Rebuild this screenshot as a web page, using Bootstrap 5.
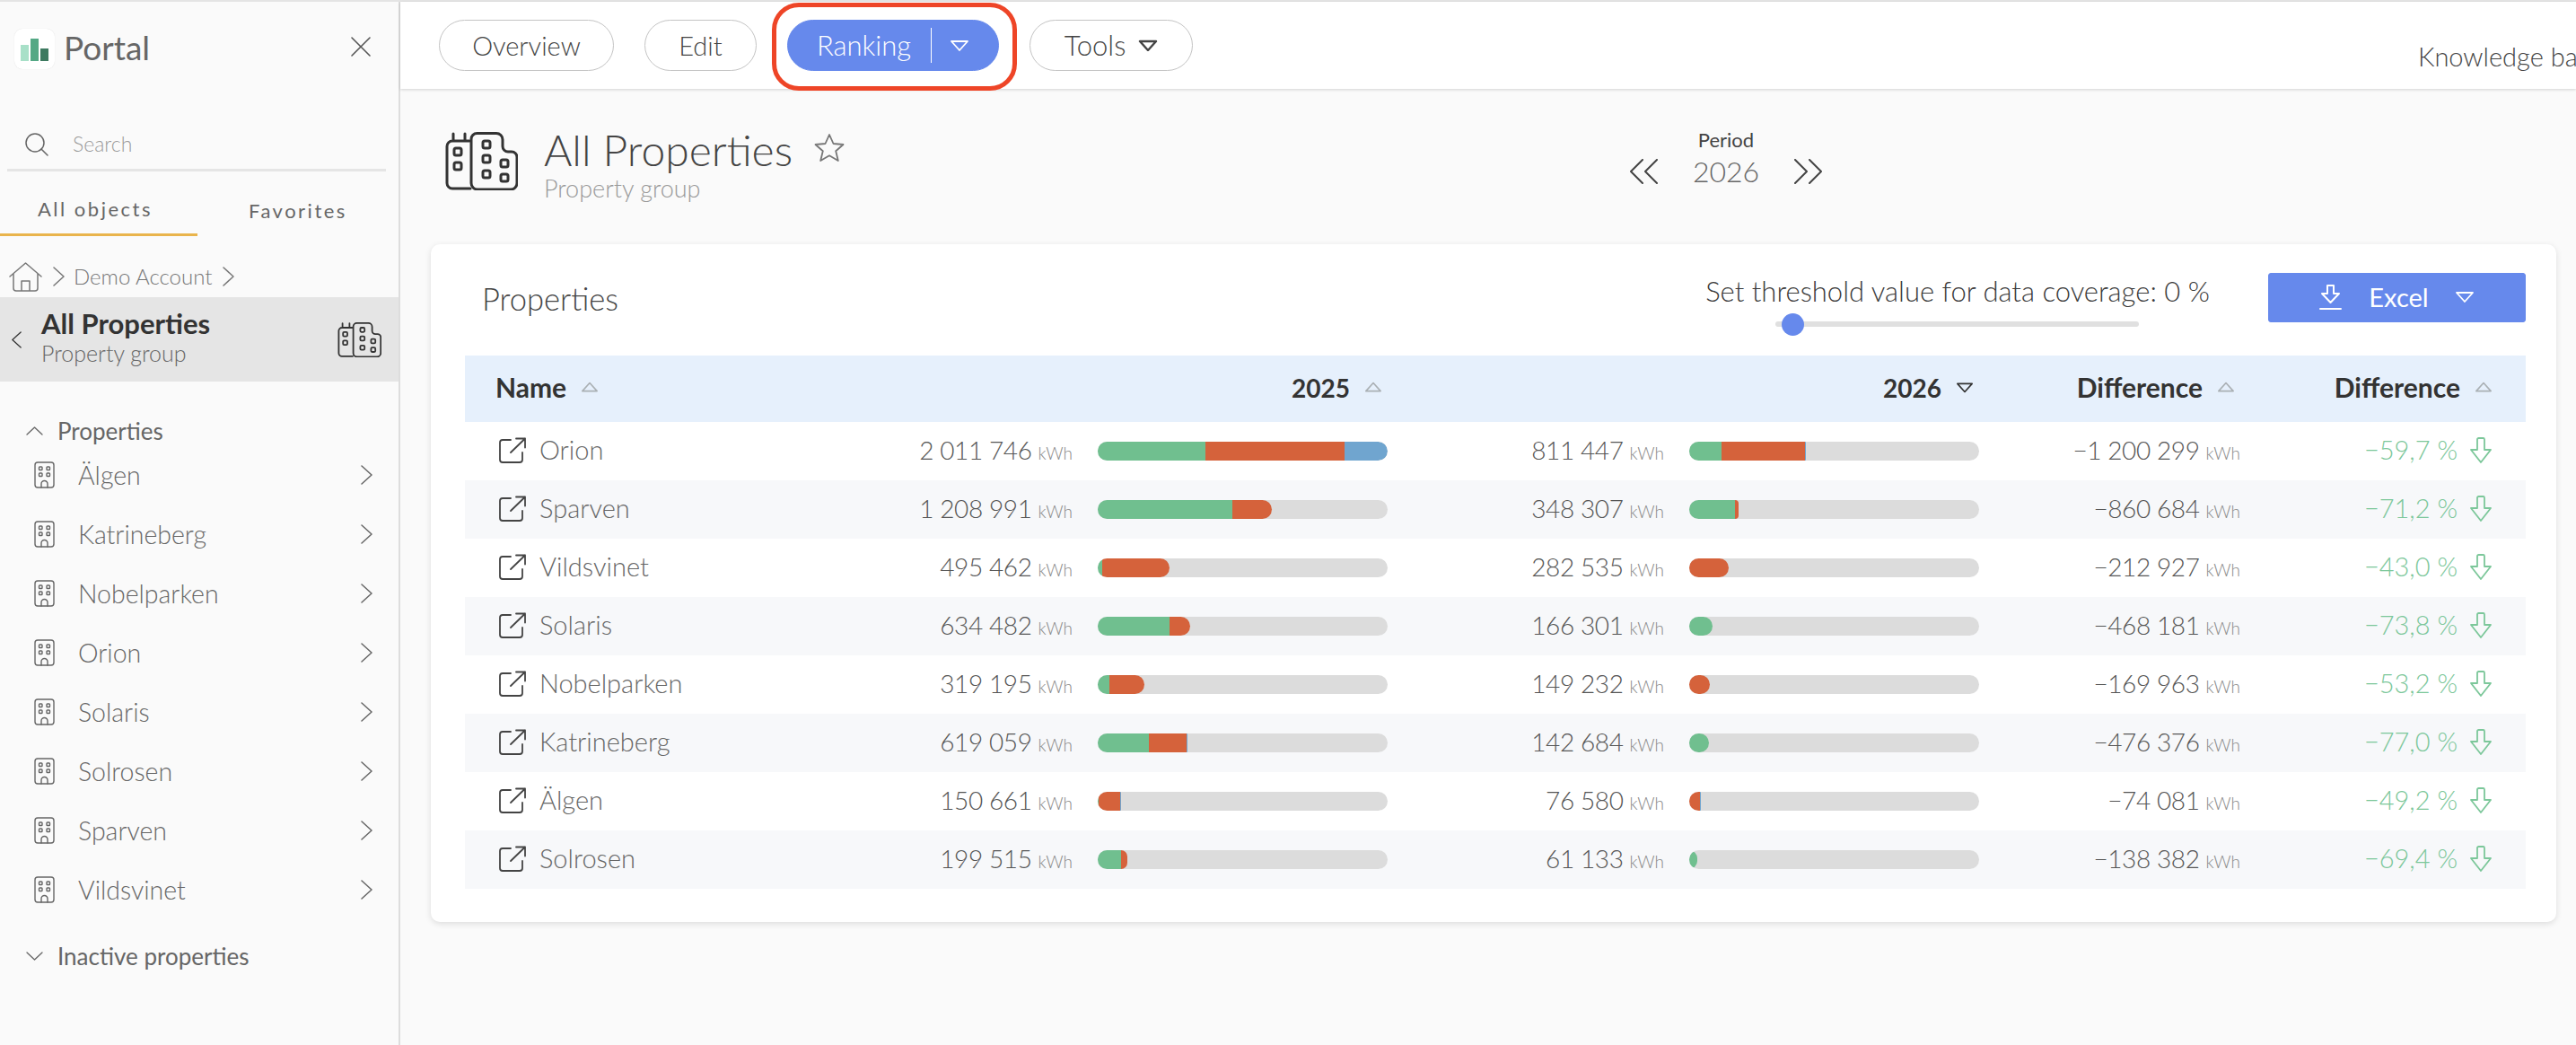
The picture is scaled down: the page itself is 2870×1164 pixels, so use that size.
<!DOCTYPE html>
<html lang="en">
<head>
    <meta charset="UTF-8">
    <title>Portal</title>
    <link href="https://cdn.jsdelivr.net/npm/bootstrap@5.3.0/dist/css/bootstrap.min.css" rel="stylesheet">
    <style>
        html, body { height: 100%; }
        body { font-family: "Lato", "Noto Sans", sans-serif; font-weight: 300; background: #fafafa; color: #444; overflow: hidden; }
        svg { display: block; flex: none; fill: none; stroke: currentColor; stroke-linecap: round; stroke-linejoin: round; }

        .app-shell { height: 1164px; border-top: 2px solid #e4e4e4; }

        /* sidebar */
        .side { width: 446px; flex: none; background: #fafafa; border-right: 2px solid #ddd; }
        .side-brand { height: 99px; padding: 30px 30px 0 16px; }
        .logo-tile { width: 45px; height: 45px; background: #fff; border-radius: 9px; padding: 10px 7px 9px; gap: 2px; box-shadow: 0 0 1px rgba(0,0,0,.15); }
        .logo-tile i { display: block; width: 9px; }
        .brand-name { font-size: 37px; font-weight: 400; color: #666; margin-left: 10px; line-height: 41px; }
        .side-search { margin: 32px 14px 0 8px; height: 58px; padding-left: 20px; border-bottom: 3px solid #e5e5e5; color: #666; }
        .side-search span { font-size: 23px; color: #9a9a9a; margin-left: 27px; }
        .side-tabs { height: 72px; }
        .side-tabs div { width: 220px; padding-left: 42px; font-size: 22px; font-weight: 400; letter-spacing: 2.5px; color: #666; line-height: 84px; }
        .side-tabs div + div { padding-left: 57px; line-height: 88px; }
        .side-tabs .on { border-bottom: 3px solid #e9b44c; }
        .crumbs { height: 68px; padding-left: 10px; color: #777; font-size: 24px; padding-top: 22px; }
        .crumbs svg { stroke-width: 1.500; }
        .side-active { height: 94px; background: #e5e5e5; padding: 0 19px 0 13px; }
        .side-active b { display: block; font-size: 31px; font-weight: 700; color: #333; line-height: 36px; }
        .side-active small { display: block; font-size: 25px; font-weight: 300; color: #666; line-height: 30px; }
        .side-head { font-size: 26px; font-weight: 400; color: #666; padding-left: 29px; gap: 16px; height: 30px; }
        .side-list { --bs-list-group-bg: transparent; --bs-list-group-border-width: 0; --bs-list-group-color: #666; margin-top: 1px; }
        .side-list .list-group-item { height: 66px; padding: 0 29px 0 38px; font-size: 28.500px; }
        .side-list svg:first-child { margin-right: 26px; }

        /* top bar */
        .topbar { height: 97px; background: #fff; padding: 20px 0 0 43px; box-shadow: 0 1px 3px rgba(0,0,0,.16); gap: 34px; position: relative; }
        .pill-btn { --bs-btn-font-size: 29px; --bs-btn-font-weight: 300; --bs-btn-color: #444; --bs-btn-border-color: #c4c4c4; --bs-btn-padding-x: 0; --bs-btn-padding-y: 0; height: 57px; }
        .pill-on { --bs-btn-color: #fff; --bs-btn-bg: #6689ec; --bs-btn-border-color: #6689ec; --bs-btn-font-size: 31px; }
        .pill-tools { --bs-btn-font-size: 31px; gap: 14px; }
        .rank-wrap { position: relative; }
        .rank-mark { position: absolute; top: -19px; bottom: -22px; left: -17px; right: -20px; border: 5px solid #ee4527; border-radius: 30px; pointer-events: none; }
        .rank-sep { width: 1px; height: 39px; background: #fff; margin: 0 20px 0 22px; }
        .help-link { width: 176px; margin-left: auto; font-size: 29px; white-space: nowrap; overflow: hidden; padding-top: 19px; color: #444; }

        /* page */
        .page-head { padding: 48px 0 0 50px; height: 173px; }
        .title-area { width: 1319px; }
        .title-text { margin: -5px 0 0 29px; }
        .page-title { font-size: 48px; line-height: 50px; color: #444; margin: 0; font-weight: 300; }
        .page-sub { font-size: 27px; line-height: 30px; margin-top: 3px; color: #999; }
        .period { color: #444; margin-top: -4px; }
        .period-label { font-size: 22px; font-weight: 400; text-align: center; line-height: 26px; }
        .period-year { font-size: 32px; width: 150px; text-align: center; color: #666; line-height: 44px; }

        .data-card { --bs-card-border-width: 0; --bs-card-border-radius: 10px; margin: 0 22px 0 34px; height: 755px; box-shadow: 0 2px 7px rgba(0,0,0,.12); }
        .data-head { height: 124px; padding: 32px 34px 0 57px; }
        .data-title { font-size: 34.500px; margin-top: 4px; color: #444; font-weight: 300; line-height: 50px; }
        .threshold { width: 562px; margin-left: auto; margin-right: 65px; }
        .threshold p { font-size: 31px; line-height: 40px; margin: 0; color: #3a3a3a; font-weight: 300; text-align: center; white-space: nowrap; }
        .slide-track { position: relative; width: 405px; height: 6px; background: #e0e0e0; border-radius: 3px; margin: 14px 0 0 78px; }
        .slide-knob { position: absolute; left: 7px; top: -9px; width: 25px; height: 25px; border-radius: 50%; background: #6689ec; }
        .excel-btn { --bs-btn-bg: #6689ec; --bs-btn-color: #fff; --bs-btn-border-color: #6689ec; --bs-btn-border-radius: 3px; --bs-btn-font-size: 29px; --bs-btn-font-weight: 400; --bs-btn-padding-y: 0; --bs-btn-padding-x: 0; width: 287px; height: 55px; padding-bottom: 2px; }

        .prop-wrap { padding: 0 34px 0 38px; }
        .prop-table { table-layout: fixed; margin: 0; width: 2296px; --bs-table-bg: transparent; --bs-border-width: 0; }
        .prop-table th { height: 74px; background: #e6f0fc; font-size: 30px; font-weight: 700; color: #333; padding: 0 20px 3px 0; vertical-align: middle; }
        .prop-table th > div { gap: 16px; }
        .prop-table th .yr { font-size: 28px; }
        .prop-table th svg { color: #aab0b4; }
        .prop-table th svg.sort-on { color: #333; }
        .prop-table td { height: 65px; padding: 0 14px 3px; vertical-align: middle; font-size: 28px; letter-spacing: -.4px; color: #555; white-space: nowrap; }
        .prop-table tbody tr:nth-child(even) td { background: #f7f8fa; }
        .prop-table .prop-name { color: #666; letter-spacing: 0; font-size: 29px; }
        .prop-table .unit { font-size: 19px; color: #888; margin-left: 7px; letter-spacing: 0; }
        .prop-table .down { color: #7cc79a; font-size: 29px; letter-spacing: 0; gap: 14px; }
        .energy-bar { --bs-progress-height: 21px; --bs-progress-bg: #dcdcdc; --bs-progress-border-radius: 11px; margin-top: 3px; }
        .energy-bar .progress-bar:last-child { border-radius: 0 11px 11px 0; }
        .seg-g { background: #70bf8f; }
        .seg-o { background: #d5623b; }
        .seg-b { background: #70a5cf; }
    </style>
</head>
<body>
    <svg width="0" height="0" style="position:absolute">
        <symbol id="ic-build" viewBox="0 0 81 65">
            <path d="M28 63H8a6 6 0 0 1-6-6V16a6 6 0 0 1 6-6h19M9 9V2M22 9V2"/>
            <path d="M29 8a6.500 6.500 0 0 1 6.500-6.500H57a7 7 0 0 1 7 7V16a6 6 0 0 0 6 6h4a6 6 0 0 1 6 6V57a7 7 0 0 1-7 7H36a7 7 0 0 1-7-7z"/>
            <rect x="10" y="18" width="8" height="8" rx="2"/><rect x="10" y="34" width="8" height="8" rx="2"/>
            <rect x="42" y="10" width="8" height="8" rx="2"/><rect x="42" y="26" width="8" height="8" rx="2"/><rect x="42" y="43" width="8" height="8" rx="2"/>
            <rect x="62" y="31" width="8" height="8" rx="2"/><rect x="62" y="47" width="8" height="8" rx="2"/>
        </symbol>
        <symbol id="ic-house" viewBox="0 0 23 30">
            <rect x="1" y="1" width="21" height="28" rx="3"/>
            <rect x="5.500" y="6" width="3.500" height="3.500" rx=".8"/><rect x="14" y="6" width="3.500" height="3.500" rx=".8"/>
            <rect x="5.500" y="13" width="3.500" height="3.500" rx=".8"/><rect x="14" y="13" width="3.500" height="3.500" rx=".8"/>
            <path d="M8 29v-4a3.500 3.500 0 0 1 7 0v4"/>
        </symbol>
        <symbol id="ic-out" viewBox="0 0 31 29">
            <path d="M13 3H4a3 3 0 0 0-3 3v19a3 3 0 0 0 3 3h19a3 3 0 0 0 3-3v-8M13 17 29 1.500M19 1.500h10v10"/>
        </symbol>
        <symbol id="ic-tri-d" viewBox="0 0 22 13"><path d="M2 2h18l-9 10z"/></symbol>
        <symbol id="ic-tri-u" viewBox="0 0 22 13"><path d="M2 11h18L11 1z"/></symbol>
        <symbol id="ic-r" viewBox="0 0 13 22"><path d="M1 1l11 10L1 21"/></symbol>
        <symbol id="ic-l" viewBox="0 0 13 22"><path d="M12 1 1 11l11 10"/></symbol>
        <symbol id="ic-arrow" viewBox="0 0 24 29"><path d="M8 2.500a1.500 1.500 0 0 1 1.500-1.500h5a1.500 1.500 0 0 1 1.500 1.500V14h7L12 28 1 14h7z"/></symbol>
    </svg>

    <div class="app-shell d-flex">
        <aside class="side">
            <div class="side-brand d-flex justify-content-between">
                <div class="d-flex">
                    <div class="logo-tile d-flex align-items-end">
                        <i style="height:18px;background:#a8e0c8"></i><i style="height:25px;background:#54a885"></i><i style="height:14px;background:#3d7a60"></i>
                    </div>
                    <span class="brand-name">Portal</span>
                </div>
                <svg width="24" height="24" viewBox="0 0 24 24" stroke-width="1.600" class="mt-2 me-0" style="color:#555"><path d="M2 2l20 20M22 2 2 22"/></svg>
            </div>
            <div class="side-search d-flex align-items-center">
                <svg width="26" height="26" viewBox="0 0 26 26" stroke-width="1.500"><circle cx="11" cy="11" r="10"/><path d="M18 18l7 7"/></svg>
                <span>Search</span>
            </div>
            <div class="side-tabs d-flex">
                <div class="on">All objects</div>
                <div>Favorites</div>
            </div>
            <div class="crumbs d-flex align-items-center">
                <svg width="37" height="33" viewBox="0 0 37 33"><path d="M1 16 18.500 1 36 16M5 13v16a3 3 0 0 0 3 3h21a3 3 0 0 0 3-3V13M14 32V21h9v11"/></svg>
                <svg width="13" height="22" style="margin:0 10px 0 12px"><use href="#ic-r"/></svg>
                <span>Demo Account</span>
                <svg width="13" height="22" style="margin-left:12px"><use href="#ic-r"/></svg>
            </div>
            <div class="side-active d-flex align-items-center">
                <svg width="11" height="21" stroke-width="1.500" style="color:#333"><use href="#ic-l"/></svg>
                <div class="flex-grow-1" style="padding:0 0 6px 22px">
                    <b>All Properties</b>
                    <small>Property group</small>
                </div>
                <svg width="49" height="39" stroke-width="3" style="color:#333"><use href="#ic-build"/></svg>
            </div>
            <div class="side-head d-flex align-items-center" style="margin-top:40px">
                <svg width="19" height="10" viewBox="0 0 19 10" stroke-width="1.300"><path d="M1 9l8.500-8L18 9"/></svg>
                <span>Properties</span>
            </div>
            <div class="list-group side-list" id="sideList"></div>
            <div class="side-head d-flex align-items-center" style="margin-top:26px">
                <svg width="19" height="10" viewBox="0 0 19 10" stroke-width="1.300"><path d="M1 1l8.500 8L18 1"/></svg>
                <span>Inactive properties</span>
            </div>
        </aside>

        <main class="flex-grow-1">
            <div class="topbar d-flex align-items-start">
                <button class="btn rounded-pill pill-btn" style="width:195px">Overview</button>
                <button class="btn rounded-pill pill-btn" style="width:125px">Edit</button>
                <div class="rank-wrap">
                    <button class="btn rounded-pill pill-btn pill-on d-flex align-items-center justify-content-center" style="width:236px">
                        Ranking<span class="rank-sep"></span><svg width="22" height="13" stroke-width="1.800"><use href="#ic-tri-d"/></svg>
                    </button>
                    <span class="rank-mark"></span>
                </div>
                <button class="btn rounded-pill pill-btn pill-tools d-flex align-items-center justify-content-center" style="width:182px">
                    Tools <svg width="22" height="13" stroke-width="2.400"><use href="#ic-tri-d"/></svg>
                </button>
                <div class="help-link">Knowledge base</div>
            </div>

            <div class="page-head d-flex align-items-start">
                <div class="title-area d-flex">
                    <svg width="81" height="65" stroke-width="3" style="color:#333"><use href="#ic-build"/></svg>
                    <div class="title-text">
                        <div class="d-flex align-items-start">
                            <h1 class="page-title">All Properties</h1>
                            <svg width="34" height="32" viewBox="0 0 34 32" stroke-width="1.800" style="color:#777;margin:6px 0 0 24px"><path d="M17 2l4.500 10 11 1-8.300 7.200L26.800 31 17 25.300 7.200 31l2.600-10.800L1.500 13l11-1z"/></svg>
                        </div>
                        <div class="page-sub">Property group</div>
                    </div>
                </div>
                <div class="period d-flex align-items-end">
                    <svg width="33" height="28" viewBox="0 0 33 28" stroke-width="2" class="mb-2"><path d="M15 1 2 14l13 13M31 1 18 14l13 13"/></svg>
                    <div>
                        <div class="period-label">Period</div>
                        <div class="period-year">2026</div>
                    </div>
                    <svg width="33" height="28" viewBox="0 0 33 28" stroke-width="2" class="mb-2"><path d="M18 1l13 13-13 13M2 1l13 13L2 27"/></svg>
                </div>
            </div>

            <div class="card data-card">
                <div class="data-head d-flex align-items-start">
                    <div class="data-title">Properties</div>
                    <div class="threshold">
                        <p>Set threshold value for data coverage: 0 %</p>
                        <div class="slide-track"><span class="slide-knob"></span></div>
                    </div>
                    <button class="btn excel-btn d-flex align-items-center justify-content-center">
                        <svg width="25" height="28" viewBox="0 0 25 28" stroke-width="2"><path d="M9 1h7v9h6l-9.500 10L3 10h6zM1 27h23"/></svg>
                        <span style="margin:0 29px 0 30px">Excel</span>
                        <svg width="22" height="13" stroke-width="1.800"><use href="#ic-tri-d"/></svg>
                    </button>
                </div>
                <div class="prop-wrap">
                    <table class="table prop-table">
                        <colgroup>
                            <col style="width:382px"><col style="width:309px"><col style="width:351px"><col style="width:308px"><col style="width:351px"><col style="width:291px"><col style="width:304px">
                        </colgroup>
                        <thead>
                            <tr>
                                <th style="padding-left:34px"><div class="d-flex align-items-center">Name <svg width="20" height="13" stroke-width="1.800"><use href="#ic-tri-u"/></svg></div></th>
                                <th colspan="2"><div class="d-flex align-items-center justify-content-end yr">2025 <svg width="20" height="13" stroke-width="1.800"><use href="#ic-tri-u"/></svg></div></th>
                                <th colspan="2"><div class="d-flex align-items-center justify-content-end yr">2026 <svg width="20" height="13" stroke-width="1.800" class="sort-on"><use href="#ic-tri-d"/></svg></div></th>
                                <th><div class="d-flex align-items-center justify-content-end">Difference <svg width="20" height="13" stroke-width="1.800"><use href="#ic-tri-u"/></svg></div></th>
                                <th style="padding-right:37px"><div class="d-flex align-items-center justify-content-end">Difference <svg width="20" height="13" stroke-width="1.800"><use href="#ic-tri-u"/></svg></div></th>
                            </tr>
                        </thead>
                        <tbody id="propRows"></tbody>
                    </table>
                </div>
            </div>
        </main>
    </div>

    <script src="https://cdn.jsdelivr.net/npm/bootstrap@5.3.0/dist/js/bootstrap.bundle.min.js"></script>
    <script>
        const sideItems = ["Älgen", "Katrineberg", "Nobelparken", "Orion", "Solaris", "Solrosen", "Sparven", "Vildsvinet"];

        document.getElementById("sideList").innerHTML = sideItems.map(name => `
            <div class="list-group-item d-flex align-items-center">
                <svg width="23" height="30" stroke-width="1.400"><use href="#ic-house"/></svg>
                <span class="flex-grow-1">${name}</span>
                <svg width="13" height="22" stroke-width="1.500"><use href="#ic-r"/></svg>
            </div>`).join("");

        // bar values are [green, orange, blue] in percent of the track
        const rows = [
            ["Orion", "2 011 746", [37.2, 48, 14.8], "811 447", [11.2, 28.8, 0.3], "−1 200 299", "−59,7 %"],
            ["Sparven", "1 208 991", [46.5, 13.6, 0], "348 307", [15.8, 1.3, 0], "−860 684", "−71,2 %"],
            ["Vildsvinet", "495 462", [1.5, 23.2, 0], "282 535", [0, 13.7, 0], "−212 927", "−43,0 %"],
            ["Solaris", "634 482", [24.7, 7.1, 0], "166 301", [8.1, 0, 0], "−468 181", "−73,8 %"],
            ["Nobelparken", "319 195", [4.1, 11.9, 0], "149 232", [0, 7.1, 0], "−169 963", "−53,2 %"],
            ["Katrineberg", "619 059", [17.5, 13, 0.4], "142 684", [6.9, 0, 0], "−476 376", "−77,0 %"],
            ["Älgen", "150 661", [0.4, 7.2, 0.3], "76 580", [0, 3.6, 0.4], "−74 081", "−49,2 %"],
            ["Solrosen", "199 515", [8, 2.2, 0], "61 133", [2.8, 0, 0], "−138 382", "−69,4 %"]
        ];

        function bar(parts) {
            const cls = ["seg-g", "seg-o", "seg-b"];
            return `<div class="progress energy-bar">${parts.map((p, i) => p > 0
                ? `<div class="progress-bar ${cls[i]}" style="width:${p}%"></div>` : "").join("")}</div>`;
        }

        document.getElementById("propRows").innerHTML = rows.map(r => `
            <tr>
                <td style="padding-left:38px"><div class="d-flex align-items-center prop-name"><svg width="31" height="29" stroke-width="1.800" style="color:#444;margin-right:14px"><use href="#ic-out"/></svg><span>${r[0]}</span></div></td>
                <td class="text-end">${r[1]}<span class="unit">kWh</span></td>
                <td>${bar(r[2])}</td>
                <td class="text-end">${r[3]}<span class="unit">kWh</span></td>
                <td>${bar(r[4])}</td>
                <td class="text-end">${r[5]}<span class="unit">kWh</span></td>
                <td style="padding-right:38px"><div class="d-flex align-items-center justify-content-end down">${r[6]}<svg width="24" height="29" stroke-width="1.800"><use href="#ic-arrow"/></svg></div></td>
            </tr>`).join("");
    </script>
</body>
</html>
